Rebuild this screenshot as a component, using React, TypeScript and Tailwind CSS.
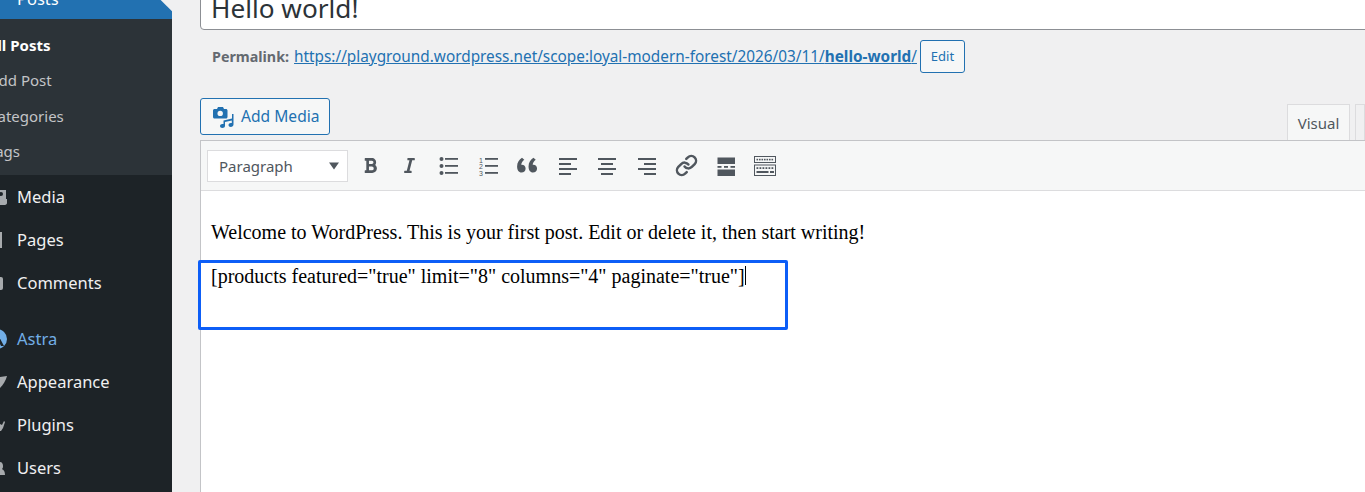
import { Link } from "lucide-react";
import { FaBold, FaItalic } from "react-icons/fa";
import type { ReactNode } from "react";

const uiFont = "font-['Noto_Sans',sans-serif]";

function ListIcon() {
  return (
    <svg width="22" height="22" viewBox="0 0 22 22" className="text-[#50575e]" fill="currentColor">
      <circle cx="3.500" cy="4" r="2" />
      <circle cx="3.500" cy="11" r="2" />
      <circle cx="3.500" cy="18" r="2" />
      <rect x="7" y="3" width="13" height="1.800" />
      <rect x="7" y="10" width="13" height="1.800" />
      <rect x="7" y="17" width="13" height="1.800" />
    </svg>
  );
}

function OrderedIcon() {
  return (
    <svg width="22" height="22" viewBox="0 0 22 22" className="text-[#50575e]" fill="currentColor">
      <text x="1" y="7.500" fontSize="7" fontFamily="Liberation Sans">1</text>
      <text x="1" y="14" fontSize="7" fontFamily="Liberation Sans">2</text>
      <text x="1" y="20.500" fontSize="7" fontFamily="Liberation Sans">3</text>
      <rect x="7" y="3" width="13" height="1.800" />
      <rect x="7" y="10" width="13" height="1.800" />
      <rect x="7" y="17" width="13" height="1.800" />
    </svg>
  );
}

function QuoteIcon() {
  return (
    <svg width="24" height="24" viewBox="0 0 22 22" className="text-[#50575e]" fill="currentColor">
      <path d="M5.500 3.500C3 5 1 7.600 1 11.500C1 15 2.600 17 5 17C7.200 17 8.800 15.500 8.800 13.300C8.800 11.200 7.400 9.800 5.400 9.800C5.200 9.800 5 9.800 4.800 9.900C5 8 6 6.300 7.600 5.200Z" />
      <path d="M16 3.500C13.500 5 11.500 7.600 11.500 11.500C11.500 15 13.100 17 15.500 17C17.700 17 19.300 15.500 19.300 13.300C19.300 11.200 17.900 9.800 15.900 9.800C15.700 9.800 15.500 9.800 15.300 9.900C15.500 8 16.500 6.300 18.100 5.200Z" />
    </svg>
  );
}

function AlignIcon({ side }: { side: "left" | "center" | "right" }) {
  const x = side === "left" ? 2 : side === "center" ? 5 : 8;
  return (
    <svg width="22" height="22" viewBox="0 0 22 22" className="text-[#50575e]" fill="currentColor">
      <rect x="2" y="3" width="18" height="2" />
      <rect x={x} y="8" width="12" height="2" />
      <rect x="2" y="13" width="18" height="2" />
      <rect x={x} y="18" width="12" height="2" />
    </svg>
  );
}

function MoreIcon() {
  return (
    <svg width="22" height="22" viewBox="0 0 22 22" className="text-[#50575e]" fill="currentColor">
      <rect x="2.500" y="2.500" width="17.500" height="6.500" />
      <rect x="2.500" y="11" width="4" height="1.800" />
      <rect x="9" y="11" width="4" height="1.800" />
      <rect x="15.500" y="11" width="4.500" height="1.800" />
      <rect x="2.500" y="14.500" width="17.500" height="6.500" />
    </svg>
  );
}

function SinkIcon() {
  const top = [5, 7.500, 10, 12.500, 15, 17.500, 20];
  const bottom = [5, 8, 11, 14, 17, 20];
  return (
    <svg width="24" height="22" viewBox="0 0 24 22" className="text-[#50575e]" fill="none" stroke="currentColor">
      <rect x="1.500" y="1.500" width="21" height="6" />
      <rect x="1.500" y="10" width="21" height="10.500" />
      {top.map((x) => (
        <rect key={x} x={x - 1.500} y="3.800" width="1.600" height="1.600" fill="currentColor" stroke="none" />
      ))}
      {bottom.map((x) => (
        <rect key={x} x={x - 1.500} y="12.200" width="1.800" height="1.800" fill="currentColor" stroke="none" />
      ))}
      <rect x="3.500" y="16" width="12" height="2" fill="currentColor" stroke="none" />
      <rect x="17" y="16" width="4" height="2" fill="currentColor" stroke="none" />
    </svg>
  );
}

function MediaIcon() {
  return (
    <svg width="22" height="22" viewBox="0 0 22 22" fill="#2271b1">
      <path d="M1 4.500C1 3.700 1.700 3 2.500 3H5L6 1H11L12 3H14C14.800 3 15.500 3.700 15.500 4.500V11C15.500 11.800 14.800 12.500 14 12.500H2.500C1.700 12.500 1 11.800 1 11Z" />
      <circle cx="8.200" cy="7.400" r="2.700" fill="#f6f7f7" />
      <path d="M11.500 14.500L20 12.500V8H21.500V18.500C21.500 20 20.200 21 18.800 21C17.400 21 16.500 20.200 16.500 19C16.500 17.800 17.600 17 18.800 17L19.800 17.100V14.500L13 16V20C13 21 11.800 22 10.300 22C9 22 8 21.200 8 20C8 18.800 9.200 18 10.300 18L11.500 18.100Z" />
    </svg>
  );
}

function MenuRow({ icon, label, className }: { icon: ReactNode; label: string; className?: string }) {
  return (
    <div className={`flex h-[43px] items-center text-[16.500px] ${className ?? "text-[#f0f0f1]"}`}>
      <div className="flex w-[17px] shrink-0 justify-start overflow-hidden">{icon}</div>
      <span>{label}</span>
    </div>
  );
}

function ToolButton({ children }: { children: ReactNode }) {
  return <div className="flex w-[39.500px] shrink-0 items-center justify-center">{children}</div>;
}

const grey = "#a7aaad";

export default function App() {
  return (
    <div className={`flex h-[492px] w-[1365px] overflow-hidden bg-[#f0f0f1] ${uiFont}`}>
      {/* admin menu, scrolled so the left edge and the top are cut off */}
      <aside className="relative flex w-[172px] shrink-0 flex-col bg-[#1d2327]">
        <div className="flex h-[19px] items-end overflow-hidden bg-[#2271b1] pb-[8px] pl-[17px] text-[16.500px] leading-[24px] text-white">
          <span className="shrink-0">Posts</span>
        </div>
        <div className="absolute left-[164px] top-[-8px] h-[16px] w-[16px] rotate-45 bg-[#f0f0f1]" />
        <div className="flex h-[156px] flex-col overflow-hidden bg-[#2c3338] pt-[8px] text-[15px] text-[#c3c4c7]">
          <div className="-ml-[13px] flex h-[35.600px] items-center font-bold text-white">All Posts</div>
          <div className="-ml-[11px] flex h-[35.600px] items-center">Add Post</div>
          <div className="-ml-[12px] flex h-[35.600px] items-center">Categories</div>
          <div className="-ml-[12px] flex h-[35.600px] items-center">Tags</div>
        </div>
        <div className="flex flex-col pt-[0.500px]">
          <MenuRow
            label="Media"
            icon={
              <svg width="7" height="18" viewBox="0 0 7 18" fill={grey} className="shrink-0">
                <path d="M0 2H6V11H7V15C7 16.500 5.500 17 4 17H0Z" />
                <circle cx="1" cy="6" r="2" fill="#1d2327" />
              </svg>
            }
          />
          <MenuRow
            label="Pages"
            icon={<div className="h-[16px] w-[2px] bg-[#a7aaad]" />}
          />
          <MenuRow
            label="Comments"
            icon={<div className="h-[13px] w-[3px] rounded-r-[2px] bg-[#a7aaad]" />}
          />
          <div className="h-[13px]" />
          <MenuRow
            label="Astra"
            className="text-[#72aee6]"
            icon={
              <svg width="7" height="20" viewBox="0 0 7 20" className="shrink-0">
                <circle cx="-3" cy="10" r="10" fill="#72aee6" />
                <path d="M-3 4L4 17H1L-3 9Z" fill="#1d2327" />
              </svg>
            }
          />
          <MenuRow
            label="Appearance"
            icon={
              <svg width="8" height="14" viewBox="0 0 8 14" fill={grey} className="shrink-0">
                <path d="M0 2L7 1C6 5 3 10 0 13Z" />
              </svg>
            }
          />
          <MenuRow
            label="Plugins"
            icon={
              <svg width="5" height="12" viewBox="0 0 5 12" fill={grey} className="shrink-0">
                <path d="M0 5L2 6L4 2L5 3L3 9L1 12H0Z" />
              </svg>
            }
          />
          <MenuRow
            label="Users"
            icon={
              <svg width="5" height="14" viewBox="0 0 5 14" fill={grey} className="shrink-0">
                <path d="M0 1C2 1 3 3 3 5C3 6 3 7 2 8C3.500 9 5 10 5 14H0Z" />
              </svg>
            }
          />
        </div>
      </aside>

      <main className="flex min-w-0 flex-1 flex-col pl-[28px]">
        <div className="-mr-[20px] -mt-[12px] flex h-[42px] shrink-0 items-center rounded-[4px] border border-[#8c8f94] bg-white pl-[10px] text-[26.200px] text-[#2c3338]">
          Hello world!
        </div>

        <div className="mt-[10px] flex h-[33px] shrink-0 items-center whitespace-nowrap pl-[12px] text-[14.300px] text-[#646970]">
          <strong className="mr-[5px] font-bold">Permalink:</strong>
          <a className="text-[15.330px] text-[#2271b1] underline">
            https://playground.wordpress.net/scope:loyal-modern-forest/2026/03/11/<span className="font-bold">hello-world</span>/
          </a>
          <button className="ml-[3px] flex h-[33px] w-[45px] items-center justify-center rounded-[3px] border border-[#2271b1] bg-[#f6f7f7] text-[13px] text-[#2271b1]">
            Edit
          </button>
        </div>

        <div className="mt-[25px] flex h-[42px] shrink-0 justify-between">
          <button className="flex h-[37px] w-[130px] items-center gap-[7px] rounded-[3px] border border-[#2271b1] bg-[#f6f7f7] pl-[11px] text-[15.600px] text-[#2271b1]">
            <MediaIcon />
            Add Media
          </button>
          <div className="z-10 flex items-end">
            <div className="mt-[7px] flex h-[36px] w-[63px] items-center justify-center border border-b-0 border-[#dcdcde] bg-[#f6f7f7] pt-[1px] text-[15px] text-[#50575e]">
              Visual
            </div>
            <div className="ml-[5px] h-[36px] w-[10px] border border-b-0 border-[#dcdcde] bg-[#f0f0f1]" />
          </div>
        </div>

        <div className="relative flex min-h-0 flex-1 flex-col border-l border-t border-[#c3c4c7] bg-white">
          <div className="flex h-[50px] shrink-0 items-center border-b border-[#dcdcde] bg-[#f6f7f7] pl-[6px]">
            <div className="flex h-[32px] w-[141px] items-center justify-between border border-[#dcdcde] bg-white pl-[11px] pr-[7px] text-[15px] text-[#50575e]">
              <span className="pt-[1px]">Paragraph</span>
              <svg width="12" height="8" viewBox="0 0 12 8" fill="#50575e">
                <path d="M1 0.500H11L6 7.500Z" />
              </svg>
            </div>
            <div className="ml-[2.500px] flex items-center">
              <ToolButton><FaBold size={17} className="text-[#50575e]" /></ToolButton>
              <ToolButton><FaItalic size={17} className="text-[#50575e]" /></ToolButton>
              <ToolButton><ListIcon /></ToolButton>
              <ToolButton><OrderedIcon /></ToolButton>
              <ToolButton><QuoteIcon /></ToolButton>
              <ToolButton><AlignIcon side="left" /></ToolButton>
              <ToolButton><AlignIcon side="center" /></ToolButton>
              <ToolButton><AlignIcon side="right" /></ToolButton>
              <ToolButton><Link size={23} strokeWidth={2.600} className="text-[#50575e]" /></ToolButton>
              <ToolButton><MoreIcon /></ToolButton>
              <ToolButton><SinkIcon /></ToolButton>
            </div>
          </div>

          <div className="pl-[10px] pt-[29px] font-['Liberation_Serif',serif] text-[20px] leading-[24px] text-black">
            <p>Welcome to WordPress. This is your first post. Edit or delete it, then start writing!</p>
            <p className="mt-[20px] flex items-start">
              [products featured="true" limit="8" columns="4" paginate="true"]
              <span className="mt-[2px] h-[19px] w-px bg-black" />
            </p>
          </div>

          {/* blue annotation drawn over the editor */}
          <div className="absolute left-[-3px] top-[119px] h-[70px] w-[590px] rounded-[2px] border-[3px] border-[#0d5ef7]" />
        </div>
      </main>
    </div>
  );
}
